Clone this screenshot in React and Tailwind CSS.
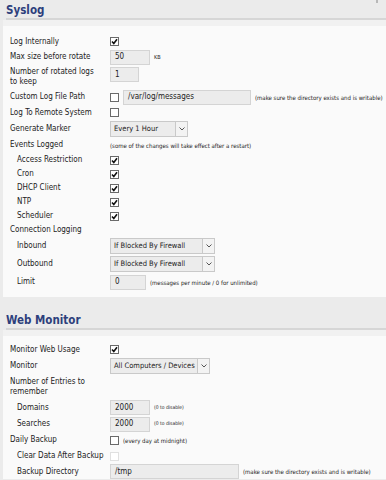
import React from "react";

const FONT = { fontFamily: "'DejaVu Sans Condensed', 'DejaVu Sans', 'Liberation Sans', sans-serif" };

function Check({ checked = false, disabled = false }) {
  return (
    <span
      className={`inline-flex items-center justify-center w-[9px] h-[9px] border bg-white ${
        disabled ? "border-[#e0e0e0] bg-[#f4f4f4]" : "border-[#6a6a6a]"
      }`}
    >
      {checked && (
        <svg width="7" height="7" viewBox="0 0 7 7">
          <path d="M1 3.5 L2.8 5.5 L6 1.2" fill="none" stroke="#111" strokeWidth="1.6" />
        </svg>
      )}
    </span>
  );
}

function Input({ value, w }) {
  return (
    <span
      className={`inline-flex items-center h-[15px] border border-[#d4d4d4] bg-[#ececec] pl-[4px] text-[8px] text-[#222] ${w}`}
    >
      {value}
    </span>
  );
}

function Select({ value, w }) {
  return (
    <span className={`inline-flex items-stretch h-[16px] border border-[#c9c9c9] bg-[#ececec] ${w}`}>
      <span className="flex-1 flex items-center pl-[3px] text-[7.5px] text-[#222] whitespace-nowrap overflow-hidden">
        {value}
      </span>
      <span className="w-[12px] flex items-center justify-center border-l border-[#c9c9c9] bg-[#f3f3f3]">
        <svg width="6" height="4" viewBox="0 0 6 4">
          <path d="M0.5 0.5 L3 3 L5.5 0.5" fill="none" stroke="#555" strokeWidth="1" />
        </svg>
      </span>
    </span>
  );
}

function Note({ children, className = "text-[6px]" }) {
  return <span className={`text-[#222] whitespace-nowrap ${className}`}>{children}</span>;
}

function Row({ label, sub, h, children, top }) {
  return (
    <div className={`flex ${top ? "items-start" : "items-center"} ${h}`}>
      <div className={`w-[107px] shrink-0 text-[8px] leading-[9.5px] text-[#222] ${sub ? "pl-[14px]" : "pl-[7px]"} ${top ? "pt-[2px]" : ""}`}>
        {label}
      </div>
      <div className={`flex items-center gap-[4px] ${top ? "pt-[2px]" : ""}`}>{children}</div>
    </div>
  );
}

function Heading({ children, mt }) {
  return (
    <div className={mt}>
      <div className="ml-[6px] h-[16px] text-[11.5px] leading-[16px] font-bold text-[#2d3f7c]">{children}</div>
      <div className="ml-[6px] h-[2px] bg-[#d6d6d6]" />
      <div className="ml-[3px] bg-[#f1f1f1] h-[6px]" />
    </div>
  );
}

export default function App() {
  return (
    <div className="w-[386px] h-[480px] overflow-hidden bg-[#ebebeb] relative" style={FONT}>
      <span className="absolute right-[8px] top-0 w-[2px] h-[3px] bg-[#b8b8b8]" />

      {/* Syslog */}
      <Heading mt="pt-[2px]">Syslog</Heading>
      <div className="ml-[3px] bg-[#fafafa] pt-[8px] pb-[6px]">
        <Row label="Log Internally" h="h-[15px]"><Check checked /></Row>
        <Row label="Max size before rotate" h="h-[16px]">
          <Input value="50" w="w-[40px]" />
          <Note className="text-[5.5px]">KB</Note>
        </Row>
        <Row label={<>Number of rotated logs<br />to keep</>} h="h-[24px]" top>
          <Input value="1" w="w-[29px]" />
        </Row>
        <Row label="Custom Log File Path" h="h-[16px]">
          <Check />
          <Input value="/var/log/messages" w="w-[128px]" />
          <Note>(make sure the directory exists and is writable)</Note>
        </Row>
        <Row label="Log To Remote System" h="h-[15px]"><Check /></Row>
        <Row label="Generate Marker" h="h-[17px]">
          <Select value="Every 1 Hour" w="w-[78px]" />
        </Row>
        <Row label="Events Logged" h="h-[16px]">
          <Note>(some of the changes will take effect after a restart)</Note>
        </Row>
        <Row label="Access Restriction" sub h="h-[14px]"><Check checked /></Row>
        <Row label="Cron" sub h="h-[14px]"><Check checked /></Row>
        <Row label="DHCP Client" sub h="h-[14px]"><Check checked /></Row>
        <Row label="NTP" sub h="h-[14px]"><Check checked /></Row>
        <Row label="Scheduler" sub h="h-[14px]"><Check checked /></Row>
        <Row label="Connection Logging" h="h-[14px]" />
        <Row label="Inbound" sub h="h-[18px]">
          <Select value="If Blocked By Firewall" w="w-[105px]" />
        </Row>
        <Row label="Outbound" sub h="h-[18px]">
          <Select value="If Blocked By Firewall" w="w-[105px]" />
        </Row>
        <Row label="Limit" sub h="h-[18px]">
          <Input value="0" w="w-[36px]" />
          <Note>(messages per minute / 0 for unlimited)</Note>
        </Row>
      </div>

      {/* Web Monitor */}
      <Heading mt="pt-[15px]">Web Monitor</Heading>
      <div className="ml-[3px] bg-[#fafafa] pt-[6px]">
        <Row label="Monitor Web Usage" h="h-[15px]"><Check checked /></Row>
        <Row label="Monitor" h="h-[18px]">
          <Select value="All Computers / Devices" w="w-[100px]" />
        </Row>
        <Row label={<>Number of Entries to<br />remember</>} h="h-[24px]" top />
        <Row label="Domains" sub h="h-[17px]">
          <Input value="2000" w="w-[40px]" />
          <Note className="text-[5px]">(0 to disable)</Note>
        </Row>
        <Row label="Searches" sub h="h-[16px]">
          <Input value="2000" w="w-[40px]" />
          <Note className="text-[5px]">(0 to disable)</Note>
        </Row>
        <Row label="Daily Backup" h="h-[16px]">
          <Check />
          <Note>(every day at midnight)</Note>
        </Row>
        <Row label="Clear Data After Backup" sub h="h-[16px]"><Check disabled /></Row>
        <Row label="Backup Directory" sub h="h-[15px]">
          <Input value="/tmp" w="w-[129px]" />
          <Note>(make sure the directory exists and is writable)</Note>
        </Row>
      </div>
    </div>
  );
}
